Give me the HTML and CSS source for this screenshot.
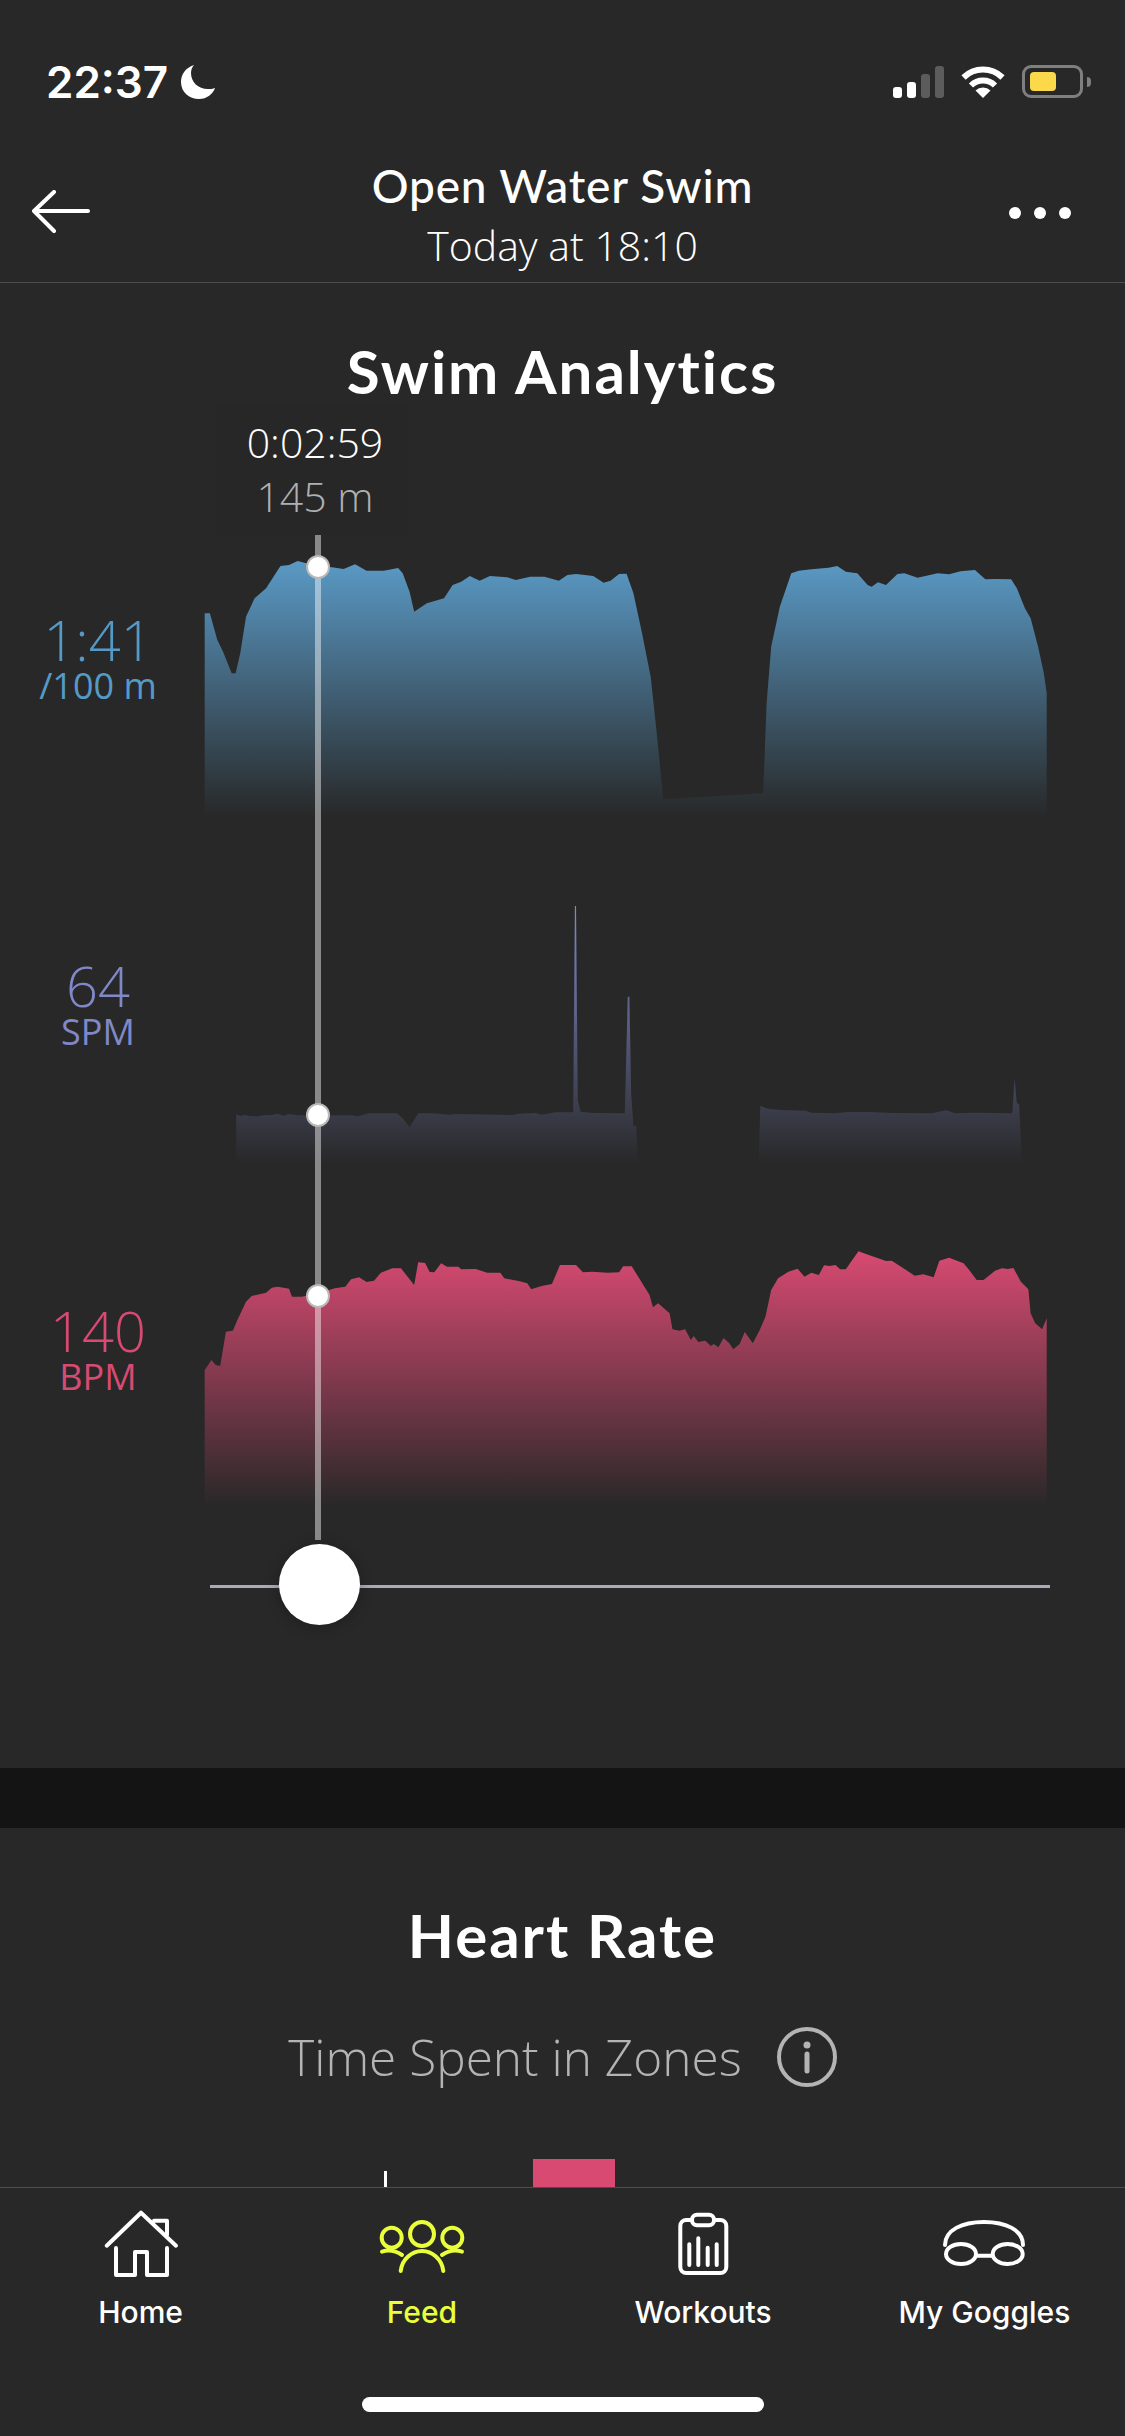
FILE: index.html
```html
<!DOCTYPE html>
<html>
<head>
  <meta charset="UTF-8">
  <title>Open Water Swim</title>
  <link rel="stylesheet" href="styles.css">
</head>
<body>
  <div class="status">
    <div class="status-left">
      <span class="clock">22:37</span>
      <svg class="moon" width="36" height="36" viewBox="0 0 36 36"><path d="M14 1C5 4 1 11 1 18c0 10 8 17 18 17 8 0 14-5 16-11-2 1-5 1-7 1-10 0-17-7-17-16 0-3 1-6 3-8z" fill="#fff"/></svg>
    </div>
    <div class="status-right">
      <div class="signal">
        <i class="bar bar1"></i><i class="bar bar2"></i><i class="bar bar3"></i><i class="bar bar4"></i>
      </div>
      <svg class="wifi" width="44" height="33" viewBox="0 0 44 33">
        <path d="M2.5 12.5A28 28 0 0 1 41.500 12.500" fill="none" stroke="#fff" stroke-width="6"/>
        <path d="M10 20.500A17 17 0 0 1 34 20.500" fill="none" stroke="#fff" stroke-width="6"/>
        <path d="M22 33L14.500 25.500A11 11 0 0 1 29.500 25.500Z" fill="#fff"/>
      </svg>
      <div class="battery"><div class="battery-fill"></div></div>
      <div class="battery-nub"></div>
    </div>
  </div>

  <div class="nav">
    <svg class="back" width="60" height="44" viewBox="0 0 60 44"><path d="M22 2L2 21l20 20M2 21h54" fill="none" stroke="#fff" stroke-width="4" stroke-linecap="round" stroke-linejoin="round"/></svg>
    <div class="nav-title">
      <div class="nav-name">Open Water Swim</div>
      <div class="nav-date">Today at 18:10</div>
    </div>
    <div class="more"><i></i><i></i><i></i></div>
  </div>

  <section class="analytics">
    <h2 class="heading heading-swim">Swim Analytics</h2>

    <div class="charts">
      <div class="tooltip">
        <div class="tooltip-time">0:02:59</div>
        <div class="tooltip-dist">145 m</div>
      </div>

      <div class="row">
        <div class="metric metric-pace">
          <span class="metric-value">1:41</span>
          <span class="metric-unit">/100 m</span>
        </div>
        <svg class="chart" viewBox="0 0 1568 960" preserveAspectRatio="none">
          <defs><linearGradient id="paceFill" gradientUnits="userSpaceOnUse" x1="0" y1="90" x2="0" y2="860"><stop offset="0" stop-color="#5a9ac6"/><stop offset="1" stop-color="#5a9ac6" stop-opacity="0"/></linearGradient></defs>
          <path fill="url(#paceFill)" d="M43 860L43 250 52 250 65 330 75 365 90 430 97 430 105 370 115 260 130 205 150 175 175 108 190 105 205 93 220 100 240 110 265 112 285 117 305 103 325 122 355 122 380 114 388 130 400 185 408 245 430 220 460 205 475 165 490 155 505 138 522 152 540 138 570 142 585 150 610 140 635 140 660 152 675 135 690 132 720 138 738 158 750 152 765 132 778 131 790 190 805 310 820 440 830 600 842 808 1016 790 1022 520 1030 350 1045 230 1065 130 1078 122 1100 118 1130 113 1145 108 1160 125 1180 130 1198 165 1205 170 1216 157 1230 165 1250 132 1262 130 1285 143 1320 130 1340 133 1360 124 1385 120 1403 148 1420 147 1448 148 1458 175 1472 235 1482 265 1495 350 1505 430 1510 490 1510 860Z"/>
        </svg>
      </div>

      <div class="row row-cadence">
        <div class="metric metric-cadence">
          <span class="metric-value">64</span>
          <span class="metric-unit">SPM</span>
        </div>
        <svg class="chart" viewBox="0 0 1568 960" preserveAspectRatio="none">
          <defs><linearGradient id="cadenceFill" gradientUnits="userSpaceOnUse" x1="0" y1="78" x2="0" y2="850"><stop offset="0" stop-color="#808acb"/><stop offset="1" stop-color="#808acb" stop-opacity="0"/></linearGradient></defs>
          <path fill="url(#cadenceFill)" d="M98 850L98 703 106 708 112 704 120 708 135 709 148 705 158 706 170 701 180 707 190 702 205 706 300 706 310 709 320 704 328 700 378 700 388 715 400 742 415 700 440 700 470 704 480 702 580 705 590 701 620 699 630 704 655 697 685 697 688 78 690 78 693 660 698 695 720 699 775 700 780 350 783 350 786 640 790 738 795 738 798 850Z"/>
          <path fill="url(#cadenceFill)" d="M1008 850L1011 677 1020 684 1030 688 1050 690 1090 692 1100 698 1140 700 1165 696 1200 696 1240 699 1310 700 1335 691 1350 700 1385 698 1450 700 1454 597 1458 670 1462 672 1467 850Z"/>
        </svg>
      </div>

      <div class="row row-heart">
        <div class="metric metric-heart">
          <span class="metric-value">140</span>
          <span class="metric-unit">BPM</span>
        </div>
        <svg class="chart" viewBox="0 0 1568 960" preserveAspectRatio="none">
          <defs><linearGradient id="heartFill" gradientUnits="userSpaceOnUse" x1="0" y1="94" x2="0" y2="860"><stop offset="0" stop-color="#d84a72"/><stop offset="1" stop-color="#d84a72" stop-opacity="0"/></linearGradient></defs>
          <path fill="url(#heartFill)" d="M43 860L43 450 55 420 62 435 70 438 80 335 92 332 100 300 115 245 125 228 150 218 160 203 170 200 190 206 195 230 212 230 240 220 270 205 288 200 298 178 312 172 325 186 338 182 350 158 370 145 385 145 408 195 415 127 427 129 435 156 443 157 455 130 465 140 485 140 490 148 515 147 535 158 558 158 565 175 590 183 605 190 612 208 630 198 648 192 662 135 690 135 702 157 718 155 745 158 765 157 772 139 787 139 800 175 818 225 824 262 833 250 850 275 853 280 858 328 870 332 880 328 890 360 895 348 903 366 915 362 925 378 930 372 938 382 947 354 957 370 964 388 975 372 984 336 998 370 1010 330 1020 290 1030 210 1042 175 1060 155 1076 146 1088 170 1100 158 1113 165 1122 136 1132 138 1142 135 1150 148 1160 148 1182 94 1200 105 1230 123 1240 122 1265 150 1280 167 1295 163 1313 172 1323 122 1340 113 1365 130 1375 150 1388 180 1400 180 1420 152 1432 145 1442 147 1452 144 1465 185 1478 208 1482 280 1490 310 1502 328 1510 295 1510 860Z"/>
        </svg>
      </div>

      <div class="slider">
        <div class="slider-knob"></div>
      </div>

      <div class="crosshair"></div>
      <div class="dot dot-pace"></div>
      <div class="dot dot-cadence"></div>
      <div class="dot dot-heart"></div>
    </div>
  </section>

  <div class="band"></div>

  <section class="heart">
    <h2 class="heading heading-heart">Heart Rate</h2>
    <div class="zones-title">
      <span>Time Spent in Zones</span>
      <svg class="info" width="62" height="62" viewBox="0 0 62 62">
        <circle cx="31" cy="31" r="28" fill="none" stroke="#b4b4b4" stroke-width="4"/>
        <circle cx="31" cy="19" r="3.500" fill="#b4b4b4"/>
        <path d="M31 28v17" fill="none" stroke="#b4b4b4" stroke-width="5" stroke-linecap="round"/>
      </svg>
    </div>
    <div class="zone-row">
      <span class="zone-time">Peak 0:08:36</span>
      <i class="zone-tick"></i>
      <span class="zone-pct">16%</span>
      <i class="zone-bar"></i>
    </div>
  </section>

  <nav class="tabbar">
    <div class="tabs">
      <div class="tab">
        <svg width="80" height="80" viewBox="0 0 80 80" fill="none" stroke="#fff" stroke-width="4" stroke-linecap="round" stroke-linejoin="round">
          <path d="M5.700 40.700L40 7.700l35 33M53 15.700h13V30M15 43v27h19V47h12v23h20V43"/>
        </svg>
        <span class="tab-label">Home</span>
      </div>
      <div class="tab tab-active">
        <svg width="80" height="80" viewBox="0 0 80 80" fill="none" stroke="#eaff3c" stroke-width="4" stroke-linecap="round">
          <circle cx="40" cy="29" r="12"/>
          <circle cx="9.700" cy="32.700" r="10"/>
          <circle cx="70.300" cy="32.700" r="10"/>
          <path d="M18.700 66C20 54 30 46 40 46s20 8 21.300 20M0 46.700C8 44 14 46 20 50M80 46.700C72 44 66 46 60 50"/>
        </svg>
        <span class="tab-label">Feed</span>
      </div>
      <div class="tab">
        <svg width="80" height="80" viewBox="0 0 80 80" fill="none" stroke="#fff" stroke-width="4" stroke-linecap="round">
          <rect x="17.300" y="15" width="46" height="53" rx="6"/>
          <rect x="29" y="9.700" width="22" height="10.600" rx="5" fill="#282828"/>
          <path d="M26.300 39.300V60M35.300 33.300V60M44.700 42.700V60M53.700 39.300V60"/>
        </svg>
        <span class="tab-label">Workouts</span>
      </div>
      <div class="tab">
        <svg width="80" height="80" viewBox="0 0 80 80" fill="none" stroke="#fff" stroke-width="4" stroke-linecap="round">
          <ellipse cx="17" cy="49" rx="15" ry="10"/>
          <ellipse cx="63.700" cy="49" rx="15" ry="10"/>
          <path d="M1 40C1 25 18 17 40 17s39 8 39 23M33 50.700h15"/>
        </svg>
        <span class="tab-label">My Goggles</span>
      </div>
    </div>
    <div class="home-bar"></div>
  </nav>
</body>
</html>
```

FILE: styles.css
```css
* {
  box-sizing: border-box;
}

body {
  margin: 0;
  width: 1125px;
  height: 2436px;
  overflow: hidden;
  display: flex;
  flex-direction: column;
  background-color: #282828;
  color: #fff;
  font-family: "Open Sans", sans-serif;
}

h2 {
  margin: 0;
}

/* status bar */
.status {
  height: 120px;
  display: flex;
  justify-content: space-between;
  align-items: flex-start;
  padding: 64px 34px 0 46px;
}

.status-left {
  display: flex;
  align-items: center;
  gap: 12px;
}

.clock {
  font-family: Inter, sans-serif;
  font-size: 44px;
  font-weight: 600;
  line-height: 36px;
}

.status-right {
  display: flex;
  align-items: flex-start;
  padding-top: 1px;
}

.signal {
  height: 33px;
  display: flex;
  align-items: flex-end;
  gap: 5px;
  margin-right: 17px;
}

.bar {
  width: 9px;
  border-radius: 3px;
  background-color: #fff;
}

.bar1 { height: 11px; }
.bar2 { height: 16px; }
.bar3 { height: 24px; background-color: #5c5c5c; }
.bar4 { height: 32px; background-color: #5c5c5c; }

.wifi {
  margin-right: 17px;
}

.battery {
  width: 61px;
  height: 33px;
  padding: 4px 5px;
  border: 3px solid #7f7f7f;
  border-radius: 9px;
}

.battery-fill {
  width: 26px;
  height: 100%;
  border-radius: 4px;
  background-color: #fcd94a;
}

.battery-nub {
  width: 4px;
  height: 10px;
  margin: 12px 0 0 4px;
  border-radius: 0 4px 4px 0;
  background-color: #7f7f7f;
}

/* navigation */
.nav {
  height: 163px;
  display: grid;
  grid-template-columns: 1fr auto 1fr;
  align-items: center;
  padding: 0 32px;
  border-bottom: 1px solid #4d4d4d;
}

.back {
  margin-top: 22px;
}

.nav-title {
  text-align: center;
  margin-top: 27px;
}

.nav-name {
  font-family: Lato, sans-serif;
  font-size: 46px;
  font-weight: 500;
  letter-spacing: 0.8px;
  line-height: 60px;
}

.nav-date {
  font-size: 41px;
  font-weight: 300;
  line-height: 58px;
}

.more {
  justify-self: end;
  display: flex;
  gap: 13px;
  margin: 24px 22px 0 0;
}

.more i {
  width: 12px;
  height: 12px;
  border-radius: 50%;
  background-color: #fff;
}

/* swim analytics */
.analytics {
  height: 1485px;
  flex-shrink: 0;
}

.heading {
  font-family: Lato, sans-serif;
  font-size: 60px;
  font-weight: 700;
  letter-spacing: 2px;
  text-align: center;
  line-height: 70px;
}

.heading-swim {
  padding-top: 53px;
}

.charts {
  position: relative;
  margin-top: 124px;
}

.row {
  display: flex;
  height: 320px;
}

.row-cadence {
  margin-top: 30px;
}

.row-heart {
  margin-top: 20px;
}

.metric {
  width: 180px;
  padding-left: 16px;
  display: flex;
  flex-direction: column;
  align-items: center;
  font-weight: 300;
}

.metric-pace { padding-top: 80px; color: #559ac7; }
.metric-cadence { padding-top: 76px; color: #8088c8; }
.metric-heart { padding-top: 81px; color: #d84a72; }

.metric-value {
  font-size: 56px;
  line-height: 58px;
}

.metric-unit {
  font-size: 36px;
  font-weight: 400;
  line-height: 36px;
}

.chart {
  width: 900px;
  height: 320px;
}

.slider {
  position: relative;
  width: 840px;
  height: 3px;
  margin: 45px 0 0 210px;
  background-color: #a9abb8;
}

.slider-knob {
  position: absolute;
  left: 69px;
  top: -41px;
  width: 81px;
  height: 81px;
  border-radius: 50%;
  background-color: #fff;
  box-shadow: 0 2px 14px rgba(0, 0, 0, 0.25);
}

.crosshair {
  position: absolute;
  left: 315px;
  top: 5px;
  width: 6px;
  height: 1005px;
  background-color: rgba(255, 255, 255, 0.45);
}

.dot {
  position: absolute;
  left: 306px;
  width: 24px;
  height: 24px;
  border: 2px solid #b8b8b8;
  border-radius: 50%;
  background-color: #fff;
}

.dot-pace { top: 25px; }
.dot-cadence { top: 573px; }
.dot-heart { top: 754px; }

.tooltip {
  position: absolute;
  left: 215px;
  top: -126px;
  width: 194px;
  height: 131px;
  padding: 11px 0 0 6px;
  background-color: #272727;
  border-radius: 4px;
  text-align: center;
  font-size: 41px;
  font-weight: 300;
}

.tooltip-time {
  line-height: 54px;
}

.tooltip-dist {
  line-height: 54px;
  color: #b0b0b0;
}

.band {
  height: 60px;
  flex-shrink: 0;
  background-color: #141414;
}

/* heart rate */
.heart {
  flex: 1;
  overflow: hidden;
}

.heading-heart {
  padding-top: 72px;
}

.zones-title {
  display: flex;
  justify-content: center;
  align-items: center;
  gap: 34px;
  margin-top: 56px;
  padding-left: 1px;
  color: #b4b4b4;
  font-size: 49.500px;
  font-weight: 300;
  line-height: 62px;
}

.zone-row {
  display: flex;
  align-items: flex-start;
  padding-left: 97px;
  margin-top: 71px;
}

.zone-time {
  width: 287px;
  margin-top: 20px;
  font-size: 34px;
  line-height: 46px;
  color: #ccc;
}

.zone-tick {
  width: 3px;
  height: 30px;
  margin-top: 12px;
  background-color: #fff;
}

.zone-pct {
  width: 110px;
  margin: 20px 0 0 36px;
  font-size: 34px;
  line-height: 46px;
  color: #ccc;
}

.zone-bar {
  width: 82px;
  height: 60px;
  background-color: #d84a72;
}

/* tab bar */
.tabbar {
  height: 249px;
  flex-shrink: 0;
  display: flex;
  flex-direction: column;
  border-top: 1px solid #4d4d4d;
}

.tabs {
  display: grid;
  grid-template-columns: repeat(4, 1fr);
  padding-top: 17px;
}

.tab {
  display: flex;
  flex-direction: column;
  align-items: center;
}

.tab svg {
  overflow: visible;
}

.tab-label {
  margin-top: 8px;
  font-family: Inter, sans-serif;
  font-size: 30px;
  font-weight: 500;
  line-height: 38px;
}

.tab-active .tab-label {
  color: #eaff3c;
}

.home-bar {
  width: 402px;
  height: 15px;
  margin: auto auto 24px;
  border-radius: 8px;
  background-color: #fff;
}
```
